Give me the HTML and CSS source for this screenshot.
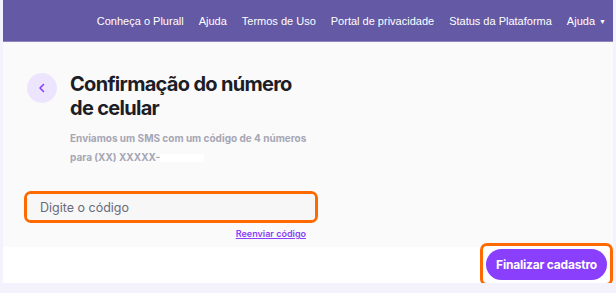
FILE: index.html
```html
<!DOCTYPE html>
<html lang="pt-BR">
<head>
    <meta charset="UTF-8">
    <meta name="viewport" content="width=device-width, initial-scale=1.0">
    <title>Confirmação do número de celular</title>
    <link rel="stylesheet" href="styles.css">
</head>
<body>
    <div class="frame">
        <nav class="topbar">
            <a href="#">Conheça o Plurall</a>
            <a href="#">Ajuda</a>
            <a href="#">Termos de Uso</a>
            <a href="#">Portal de privacidade</a>
            <a href="#">Status da Plataforma</a>
            <a href="#" class="dropdown">Ajuda <span class="caret">&#9660;</span></a>
        </nav>

        <main class="content">
            <div class="heading">
                <button class="back" aria-label="Voltar">
                    <svg width="10" height="10" viewBox="0 0 10 10">
                        <path d="M6.5 1.5 L3 5 L6.5 8.5" fill="none" stroke="#8a3ffc" stroke-width="1.6" stroke-linecap="round" stroke-linejoin="round"/>
                    </svg>
                </button>
                <div>
                    <h1>Confirmação do número de celular</h1>
                    <p class="hint">Enviamos um SMS com um código de 4 números<br>para (XX) XXXXX-<span class="redacted"></span></p>
                </div>
            </div>

            <div class="field">
                <input type="text" placeholder="Digite o código">
            </div>
            <div class="resend">
                <a href="#">Reenviar código</a>
            </div>
        </main>

        <footer class="actions">
            <div class="highlight">
                <button class="primary">Finalizar cadastro</button>
            </div>
        </footer>
    </div>
</body>
</html>
```

FILE: styles.css
```css
body {
    margin: 0;
    background-color: #f4f2fd;
    font-family: Inter, sans-serif;
}
.frame {
    margin: 0 3px;
    height: 283px;
    display: flex;
    flex-direction: column;
}
.topbar {
    height: 41px;
    flex-shrink: 0;
    background-color: #6459a4;
    border-bottom: 1px solid #8f86c0;
    display: flex;
    align-items: center;
    justify-content: flex-end;
    gap: 15px;
    padding-right: 7px;
    font-family: "Liberation Sans", Arial, sans-serif;
    font-size: 11px;
}
.topbar a {
    color: #ffffff;
    text-decoration: none;
    white-space: nowrap;
}
.caret {
    font-size: 7px;
    vertical-align: 1px;
    margin-left: 1px;
}
.content {
    background-color: #fafafa;
    height: 205px;
    padding: 0 0 0 21px;
}
.heading {
    display: flex;
    gap: 13px;
    padding: 30px 0 0 3px;
}
.back {
    width: 30px;
    height: 30px;
    border-radius: 50%;
    border: none;
    background-color: #ede5fd;
    display: flex;
    align-items: center;
    justify-content: center;
    padding: 0;
    margin-top: 1px;
    flex-shrink: 0;
}
h1 {
    margin: 0;
    width: 230px;
    font-size: 20px;
    font-weight: 700;
    line-height: 24px;
    color: #1d1d27;
    letter-spacing: -0.7px;
}
.hint {
    margin: 9px 0 0;
    white-space: nowrap;
    font-size: 10px;
    font-weight: 700;
    line-height: 19px;
    color: #a6a6b4;
}
.redacted {
    display: inline-block;
    width: 44px;
    height: 8px;
    background-color: #ffffff;
    vertical-align: -1px;
}
.field {
    margin-top: 24px;
    width: 288px;
    border: 3px solid #ff6a00;
    border-radius: 7px;
}
.field input {
    width: 100%;
    box-sizing: border-box;
    height: 26px;
    border: none;
    border-radius: 4px;
    background-color: #f7f7f8;
    padding: 0 13px;
    font-family: Inter, sans-serif;
    font-size: 12.5px;
    color: #5f5f6d;
}
.field input::placeholder {
    color: #6a6a78;
}
.resend {
    width: 282px;
    text-align: right;
    margin-top: 2px;
    line-height: 12px;
}
.resend a {
    font-size: 9px;
    font-weight: 600;
    color: #8a3ffc;
}
.actions {
    background-color: #ffffff;
    height: 36px;
    display: flex;
    justify-content: flex-end;
    align-items: flex-start;
}
.highlight {
    margin-top: -4px;
    border: 3px solid #ff6a00;
    border-radius: 7px;
    padding: 3px;
    background-color: #ffffff;
}
.primary {
    display: block;
    height: 31px;
    padding: 0 10px;
    white-space: nowrap;
    border: none;
    border-radius: 16px;
    background-color: #8a3ffc;
    color: #ffffff;
    font-family: Inter, sans-serif;
    font-size: 12px;
    font-weight: 700;
    letter-spacing: -0.2px;
    cursor: pointer;
}
```
